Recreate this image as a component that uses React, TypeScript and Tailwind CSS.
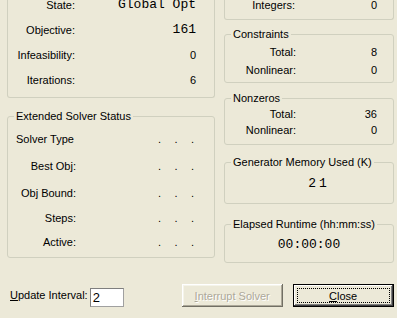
import React from 'react';

interface GroupProps {
  title: string;
  className?: string;
  children?: React.ReactNode;
}

const Group: React.FC<GroupProps> = ({ title, className, children }) => {
  return (
    <fieldset className={`border border-[#d0d0bf] rounded-[3px] ${className ?? ''}`}>
      <legend className="ml-[6px] px-[2px] leading-[13px]">{title}</legend>
      {children}
    </fieldset>
  );
};

const Row: React.FC<{ label: string; value: string; mono?: boolean; h: string; labelW: string }> = ({
  label,
  value,
  mono,
  h,
  labelW,
}) => (
  <div className={`flex items-center ${h}`}>
    <span className={`${labelW} text-right`}>{label}</span>
    <span
      className={`ml-auto ${mono ? "font-['Liberation_Mono',monospace] text-[13px]" : ''}`}
    >
      {value}
    </span>
  </div>
);

const Dots = () => (
  <span className="ml-auto flex w-[36px] justify-between">
    <span>.</span>
    <span>.</span>
    <span>.</span>
  </span>
);

export default function App() {
  const ext = [
    { label: 'Solver Type', h: 'h-[26px]', left: true },
    { label: 'Best Obj:', h: 'h-[28px]' },
    { label: 'Obj Bound:', h: 'h-[26px]' },
    { label: 'Steps:', h: 'h-[24px]' },
    { label: 'Active:', h: 'h-[24px]' },
  ];

  return (
    <div className="w-[397px] h-[318px] overflow-hidden bg-[#ece9d8] text-[11px] leading-[16px] text-black font-['Liberation_Sans',Arial,sans-serif]">
      <div className="flex pl-[7px] gap-[9px] items-start">
        {/* left column */}
        <div className="flex w-[208px] flex-col">
          <div className="h-[98px] border-x border-b border-[#d0d0bf] rounded-b-[3px] pr-[18px]">
            <div className="-mt-[8px]">
              <Row label="State:" value="Global Opt" mono h="h-[25px]" labelW="w-[67px]" />
              <Row label="Objective:" value="161" mono h="h-[25px]" labelW="w-[67px]" />
              <Row label="Infeasibility:" value="0" h="h-[25px]" labelW="w-[67px]" />
              <Row label="Iterations:" value="6" h="h-[25px]" labelW="w-[67px]" />
            </div>
          </div>
          <Group title="Extended Solver Status" className="mt-[12px] h-[148px]">
            <div className="pt-[3px] pl-[8px] pr-[20px]">
              {ext.map((r) => (
                <div key={r.label} className={`flex items-center ${r.h}`}>
                  <span className={`w-[60px] ${r.left ? 'text-left' : 'text-right'}`}>{r.label}</span>
                  <Dots />
                </div>
              ))}
            </div>
          </Group>
        </div>

        {/* right column */}
        <div className="flex w-[170px] flex-col">
          <div className="h-[20px] border-x border-b border-[#d0d0bf] rounded-b-[3px] pr-[16px]">
            <div className="-mt-[3px]">
              <Row label="Integers:" value="0" h="h-[16px]" labelW="w-[70px]" />
            </div>
          </div>
          <Group title="Constraints" className="mt-[8px] h-[55px]">
            <div className="pt-[2px] pr-[16px]">
              <Row label="Total:" value="8" h="h-[18px]" labelW="w-[71px]" />
              <Row label="Nonlinear:" value="0" h="h-[18px]" labelW="w-[71px]" />
            </div>
          </Group>
          <Group title="Nonzeros" className="mt-[9px] h-[53px]">
            <div className="pt-[1px] pr-[16px]">
              <Row label="Total:" value="36" h="h-[16px]" labelW="w-[71px]" />
              <Row label="Nonlinear:" value="0" h="h-[16px]" labelW="w-[71px]" />
            </div>
          </Group>
          <Group title="Generator Memory Used (K)" className="mt-[11px] h-[48px]">
            <div className="pt-[7px] pl-[20px] text-center font-['Liberation_Mono',monospace] text-[13px] tracking-[3px]">
              21
            </div>
          </Group>
          <Group title="Elapsed Runtime (hh:mm:ss)" className="mt-[14px] h-[45px]">
            <div className="pt-[6px] text-center font-['Liberation_Mono',monospace] text-[13px]">
              00:00:00
            </div>
          </Group>
        </div>
      </div>

      {/* bottom bar */}
      <div className="mt-[21px] flex items-start">
        <span className="ml-[10px] mt-[3px]">
          <span className="underline">U</span>pdate Interval:
        </span>
        <div className="ml-[2px] mt-[4px] h-[19px] w-[34px] border border-t-[#7f7f7f] border-l-[#7f7f7f] border-r-[#a0a0a0] border-b-[#a0a0a0] bg-white pl-[2px] text-[13px] leading-[17px]">
          2
        </div>
        <button
          disabled
          className="ml-[58px] h-[23px] w-[101px] bg-[#ece9d8] text-[#aca899] [text-shadow:1px_1px_#fff] shadow-[inset_-1px_-1px_#716f64,inset_1px_1px_#fff,inset_-2px_-2px_#aca899,inset_2px_2px_#f5f4ea]"
        >
          <span className="underline">I</span>nterrupt Solver
        </button>
        <button className="ml-[10px] h-[23px] w-[101px] border border-black bg-[#ece9d8] p-[3px] shadow-[inset_-1px_-1px_#404040,inset_1px_1px_#fff,inset_-2px_-2px_#808080]">
          <div className="flex h-full w-full items-center justify-center border border-dotted border-black">
            <span>
              <span className="underline">C</span>lose
            </span>
          </div>
        </button>
      </div>
    </div>
  );
}
